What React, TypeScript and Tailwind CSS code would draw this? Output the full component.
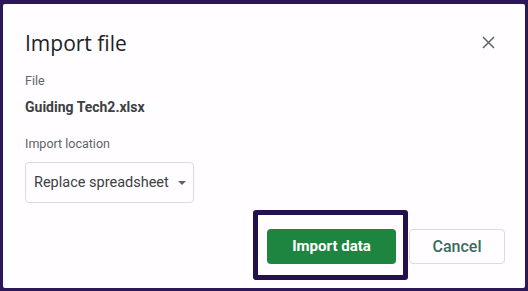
import React from 'react';

const App: React.FC = () => {
  return (
    <div className="w-[528px] h-[291px] bg-[#2c1858] pt-[4px] pl-[3px] pr-[3px] pb-[3px] font-['Roboto',sans-serif]">
      <div className="h-full w-full bg-[#fffdff] rounded-[2px] flex flex-col">
        {/* Header */}
        <div className="flex items-start justify-between pl-[22px] pr-[30px] pt-[24px]">
          <h1 className="text-[21px] leading-[30px] text-[#202124] font-['Open_Sans',sans-serif] font-normal">Import file</h1>
          <button type="button" className="mt-[8px] text-[#5f6368]">
            <svg width="13" height="13" viewBox="0 0 13 13" fill="none" stroke="currentColor" strokeWidth="1.5">
              <path d="M1 1 L12 12 M12 1 L1 12" />
            </svg>
          </button>
        </div>

        {/* Body */}
        <div className="pl-[22px] mt-[15px]">
          <p className="text-[12.5px] leading-[16px] text-[#5f6368]">File</p>
          <p className="mt-[9px] text-[14px] leading-[18px] font-bold text-[#3c4043]">Guiding Tech2.xlsx</p>
          <p className="mt-[20px] text-[12.5px] leading-[16px] text-[#5f6368]">Import location</p>
          <div className="mt-[10px] w-[169px] h-[41px] border border-[#dadce0] rounded-[4px] flex items-center pl-[8px]">
            <span className="text-[14.5px] text-[#3c4043]">Replace spreadsheet</span>
            <svg className="ml-[9px]" width="8" height="4" viewBox="0 0 8 4" fill="#5f6368">
              <path d="M0 0 L8 0 L4 4 Z" />
            </svg>
          </div>
        </div>

        {/* Footer */}
        <div className="flex justify-end items-start pr-[20px] mt-[7px]">
          <div className="border-[5px] border-[#24104a] rounded-[3px] pl-[9px] pr-[7px] pt-[14px] pb-[11px]">
            <button type="button" className="w-[129px] h-[35px] bg-[#1e8540] rounded-[4px] text-white text-[15px] font-bold">
              Import data
            </button>
          </div>
          <button type="button" className="ml-[1px] mt-[19px] w-[96px] h-[35px] border border-[#dadce0] rounded-[4px] text-[16px] text-[#3a6b5e] font-medium">
            Cancel
          </button>
        </div>
      </div>
    </div>
  );
};

export default App;
